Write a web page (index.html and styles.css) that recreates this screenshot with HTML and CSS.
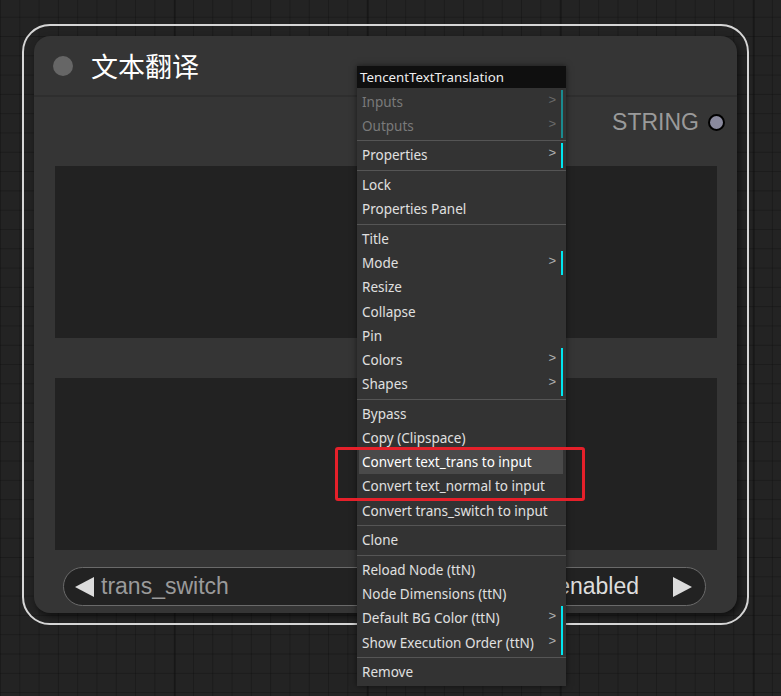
FILE: index.html
```html
<!DOCTYPE html>
<html>
<head>
<meta charset="utf-8">
<link rel="stylesheet" href="styles.css">
</head>
<body>
<div class="canvas">
  <div class="node-sel">
    <div class="node">
      <div class="node-title">
        <span class="title-dot"></span>
        <span class="title-text">文本翻译</span>
      </div>
      <div class="node-content">
        <div class="out-row">
          <span class="out-label">STRING</span>
          <span class="out-slot"></span>
        </div>
        <div class="textarea"></div>
        <div class="textarea second"></div>
        <div class="combo">
          <div class="combo-left">
            <svg class="arrow-icon" width="20" height="20" viewBox="0 0 20 20"><polygon points="0,10 19,0 19,20" fill="#dcdcdc"/></svg>
            <span class="combo-name">trans_switch</span>
          </div>
          <div class="combo-right">
            <span class="combo-value">enabled</span>
            <svg class="arrow-icon" width="20" height="20" viewBox="0 0 20 20"><polygon points="0,0 19,10 0,20" fill="#dcdcdc"/></svg>
          </div>
        </div>
      </div>
    </div>
  </div>

  <div class="menu">
    <div class="menu-title">TencentTextTranslation</div>
    <div class="menu-list">
      <div class="item sub disabled"><span>Inputs</span><span class="chev">&gt;</span></div>
      <div class="item sub disabled"><span>Outputs</span><span class="chev">&gt;</span></div>
      <div class="sep"></div>
      <div class="item sub"><span>Properties</span><span class="chev">&gt;</span></div>
      <div class="sep"></div>
      <div class="item"><span>Lock</span></div>
      <div class="item"><span>Properties Panel</span></div>
      <div class="sep"></div>
      <div class="item"><span>Title</span></div>
      <div class="item sub"><span>Mode</span><span class="chev">&gt;</span></div>
      <div class="item"><span>Resize</span></div>
      <div class="item"><span>Collapse</span></div>
      <div class="item"><span>Pin</span></div>
      <div class="item sub"><span>Colors</span><span class="chev">&gt;</span></div>
      <div class="item sub"><span>Shapes</span><span class="chev">&gt;</span></div>
      <div class="sep"></div>
      <div class="item"><span>Bypass</span></div>
      <div class="item"><span>Copy (Clipspace)</span></div>
      <div class="item hover"><span>Convert text_trans to input</span></div>
      <div class="item"><span>Convert text_normal to input</span></div>
      <div class="item"><span>Convert trans_switch to input</span></div>
      <div class="sep"></div>
      <div class="item"><span>Clone</span></div>
      <div class="sep"></div>
      <div class="item"><span>Reload Node (ttN)</span></div>
      <div class="item"><span>Node Dimensions (ttN)</span></div>
      <div class="item sub"><span>Default BG Color (ttN)</span><span class="chev">&gt;</span></div>
      <div class="item sub"><span>Show Execution Order (ttN)</span><span class="chev">&gt;</span></div>
      <div class="sep"></div>
      <div class="item"><span>Remove</span></div>
    </div>
  </div>

  <div class="mark-box"></div>
</div>
</body>
</html>
```

FILE: styles.css
```css
html, body {
  margin: 0;
  padding: 0;
}
body {
  width: 781px;
  height: 696px;
  overflow: hidden;
  background-color: #232323;
  font-family: "Liberation Sans", Arial, sans-serif;
}
.canvas {
  position: relative;
  width: 781px;
  height: 696px;
  background-color: #232323;
  background-image:
    linear-gradient(to right, rgba(0,0,0,0.22) 0 2px, transparent 2px),
    linear-gradient(to right, rgba(0,0,0,0.22) 0 1px, transparent 1px),
    linear-gradient(to bottom, rgba(0,0,0,0.22) 0 1px, transparent 1px);
  background-size: 193px 100%, 19.3px 19.3px, 19.3px 19.3px;
  background-position: 174px 0, 0 0, 0 -2.6px;
}

/* node */
.node-sel {
  position: absolute;
  left: 22px;
  top: 24px;
  border: 2px solid #d6d6d6;
  border-radius: 28px;
  padding: 10px;
}
.node {
  width: 703px;
  height: 577px;
  background: #353535;
  border-radius: 16px;
  box-shadow: 2px 3px 6px rgba(0,0,0,0.55);
  display: flex;
  flex-direction: column;
}
.node-title {
  height: 59px;
  border-bottom: 2px solid #2e2e2e;
  display: flex;
  align-items: center;
  padding-left: 19px;
}
.title-dot {
  width: 20px;
  height: 20px;
  border-radius: 50%;
  background: #666;
  margin-right: 18px;
}
.title-text {
  font-family: "Noto Sans CJK SC", "Liberation Sans", sans-serif;
  font-size: 27px;
  color: #ffffff;
  line-height: 1;
}
.node-content {
  display: flex;
  flex-direction: column;
}
.out-row {
  height: 50px;
  display: flex;
  align-items: center;
  justify-content: flex-end;
  padding-right: 12px;
  margin-bottom: 19px;
}
.out-label {
  font-size: 23px;
  color: #9a9a9a;
  margin-right: 9px;
}
.out-slot {
  width: 13px;
  height: 13px;
  border-radius: 50%;
  background: #8a8a9e;
  border: 2px solid #000;
}
.textarea {
  height: 172px;
  margin: 0 20px 0 21px;
  background: #222222;
}
.textarea.second {
  margin-top: 40px;
}
.combo {
  margin: 17px 31px 0 29px;
  height: 39px;
  box-sizing: border-box;
  border: 1px solid #6a6a6a;
  border-radius: 20px;
  background: #222222;
  display: flex;
  align-items: center;
  justify-content: space-between;
  padding: 0 12px 0 11px;
}
.combo-left, .combo-right {
  display: flex;
  align-items: center;
}
.arrow-icon {
  display: block;
}
.combo-name {
  font-size: 23px;
  color: #9a9a9a;
  margin-left: 6px;
}
.combo-value {
  font-size: 23px;
  color: #dddddd;
  margin-right: 34px;
}

/* context menu */
.menu {
  position: absolute;
  left: 357px;
  top: 66px;
  width: 209px;
  background: #333333;
  box-shadow: 0 0 6px rgba(0,0,0,0.55);
  font-family: "Noto Sans", "Liberation Sans", sans-serif;
  font-size: 13.5px;
  color: #e0e0e0;
}
.menu-title {
  height: 22px;
  line-height: 22px;
  background: #0f0f0f;
  color: #eeeeee;
  padding-left: 3px;
  font-size: 13.3px;
}
.menu-list {
  padding: 1.5px 3px 2px 2px;
}
.item {
  height: 24.2px;
  display: flex;
  align-items: center;
  justify-content: space-between;
  padding-left: 3px;
  padding-right: 5px;
  box-sizing: border-box;
  white-space: nowrap;
}
.item.sub {
  border-right: 2px solid #00e6f0;
}
.item.disabled {
  color: #7a7a7a;
}
.item.disabled.sub {
  border-right-color: #1a8a8f;
}
.item.hover {
  background: #4a4a4a;
  color: #ffffff;
}
.chev {
  color: #b0b0b0;
  font-family: "Liberation Sans", sans-serif;
  font-size: 13px;
  margin-bottom: 5px;
}
.item.disabled .chev {
  color: #6a6a6a;
}
.sep {
  height: 1px;
  background: #555555;
  margin: 2.25px -3px 2.25px -2px;
}

/* annotation box */
.mark-box {
  position: absolute;
  left: 335px;
  top: 447px;
  width: 250px;
  height: 54px;
  box-sizing: border-box;
  border: 3px solid #e5202a;
  border-radius: 3px;
}
```
